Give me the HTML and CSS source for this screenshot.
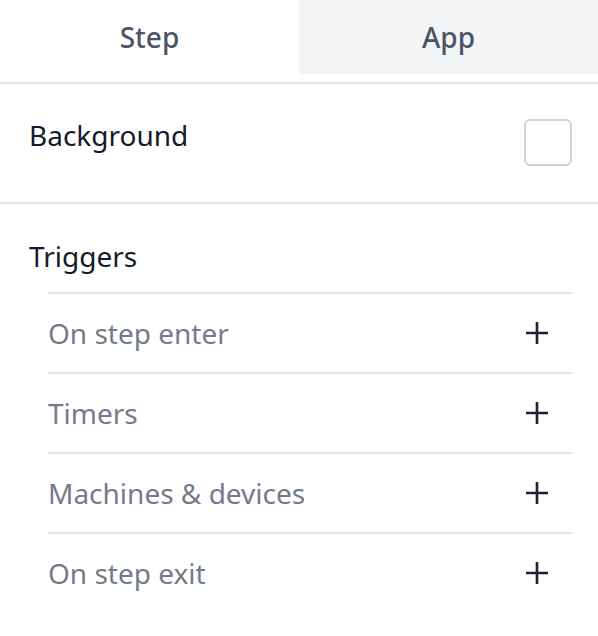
FILE: index.html
```html
<!DOCTYPE html>
<html lang="en">

<head>
  <meta charset="UTF-8">
  <meta name="viewport" content="width=device-width, initial-scale=1.0">
  <title>Step settings</title>
  <link rel="stylesheet" href="styles.css">
</head>

<body>
  <div class="panel">
    <div class="tabs">
      <button class="tab active">Step</button>
      <button class="tab">App</button>
    </div>

    <div class="section background">
      <span class="label">Background</span>
      <span class="checkbox"></span>
    </div>

    <div class="section triggers">
      <div class="label">Triggers</div>
      <ul class="trigger-list">
        <li>
          <span>On step enter</span>
          <svg class="plus" viewBox="0 0 24 24"><path d="M12 1v22M1 12h22" /></svg>
        </li>
        <li>
          <span>Timers</span>
          <svg class="plus" viewBox="0 0 24 24"><path d="M12 1v22M1 12h22" /></svg>
        </li>
        <li>
          <span>Machines &amp; devices</span>
          <svg class="plus" viewBox="0 0 24 24"><path d="M12 1v22M1 12h22" /></svg>
        </li>
        <li>
          <span>On step exit</span>
          <svg class="plus" viewBox="0 0 24 24"><path d="M12 1v22M1 12h22" /></svg>
        </li>
      </ul>
    </div>
  </div>
</body>

</html>
```

FILE: styles.css
```css
body {
  margin: 0;
  background: #fff;
  font-family: "Noto Sans", "Open Sans", sans-serif;
  font-size: 28px;
  line-height: 40px;
}

.tabs {
  display: flex;
  padding-bottom: 8px;
  border-bottom: 2px solid #e2e3e8;
}

.tab {
  flex: 1;
  height: 74px;
  border: none;
  background: #f3f4f6;
  font-family: inherit;
  font-size: 28px;
  font-weight: 500;
  color: #4a5467;
  cursor: pointer;
}

.tab.active {
  background: #fff;
}

.section {
  padding: 31px 26px 36px 29px;
}

.background {
  display: flex;
  justify-content: space-between;
  align-items: flex-start;
  border-bottom: 2px solid #e2e3e8;
}

.label {
  color: #131b2b;
}

.checkbox {
  width: 44px;
  height: 43px;
  margin-top: 4px;
  border: 2px solid #d2d2d4;
  border-radius: 6px;
}

.triggers {
  padding-top: 32px;
  padding-bottom: 0;
}

.trigger-list {
  list-style: none;
  margin: 16px 0 0 19px;
  padding: 0;
}

.trigger-list>li {
  display: flex;
  justify-content: space-between;
  align-items: center;
  height: 78px;
  border-top: 2px solid #e2e3e8;
  color: #737b8b;
}

.plus {
  width: 24px;
  height: 24px;
  margin-right: 23px;
  fill: none;
  stroke: #1b2230;
  stroke-width: 2.6;
}
```
